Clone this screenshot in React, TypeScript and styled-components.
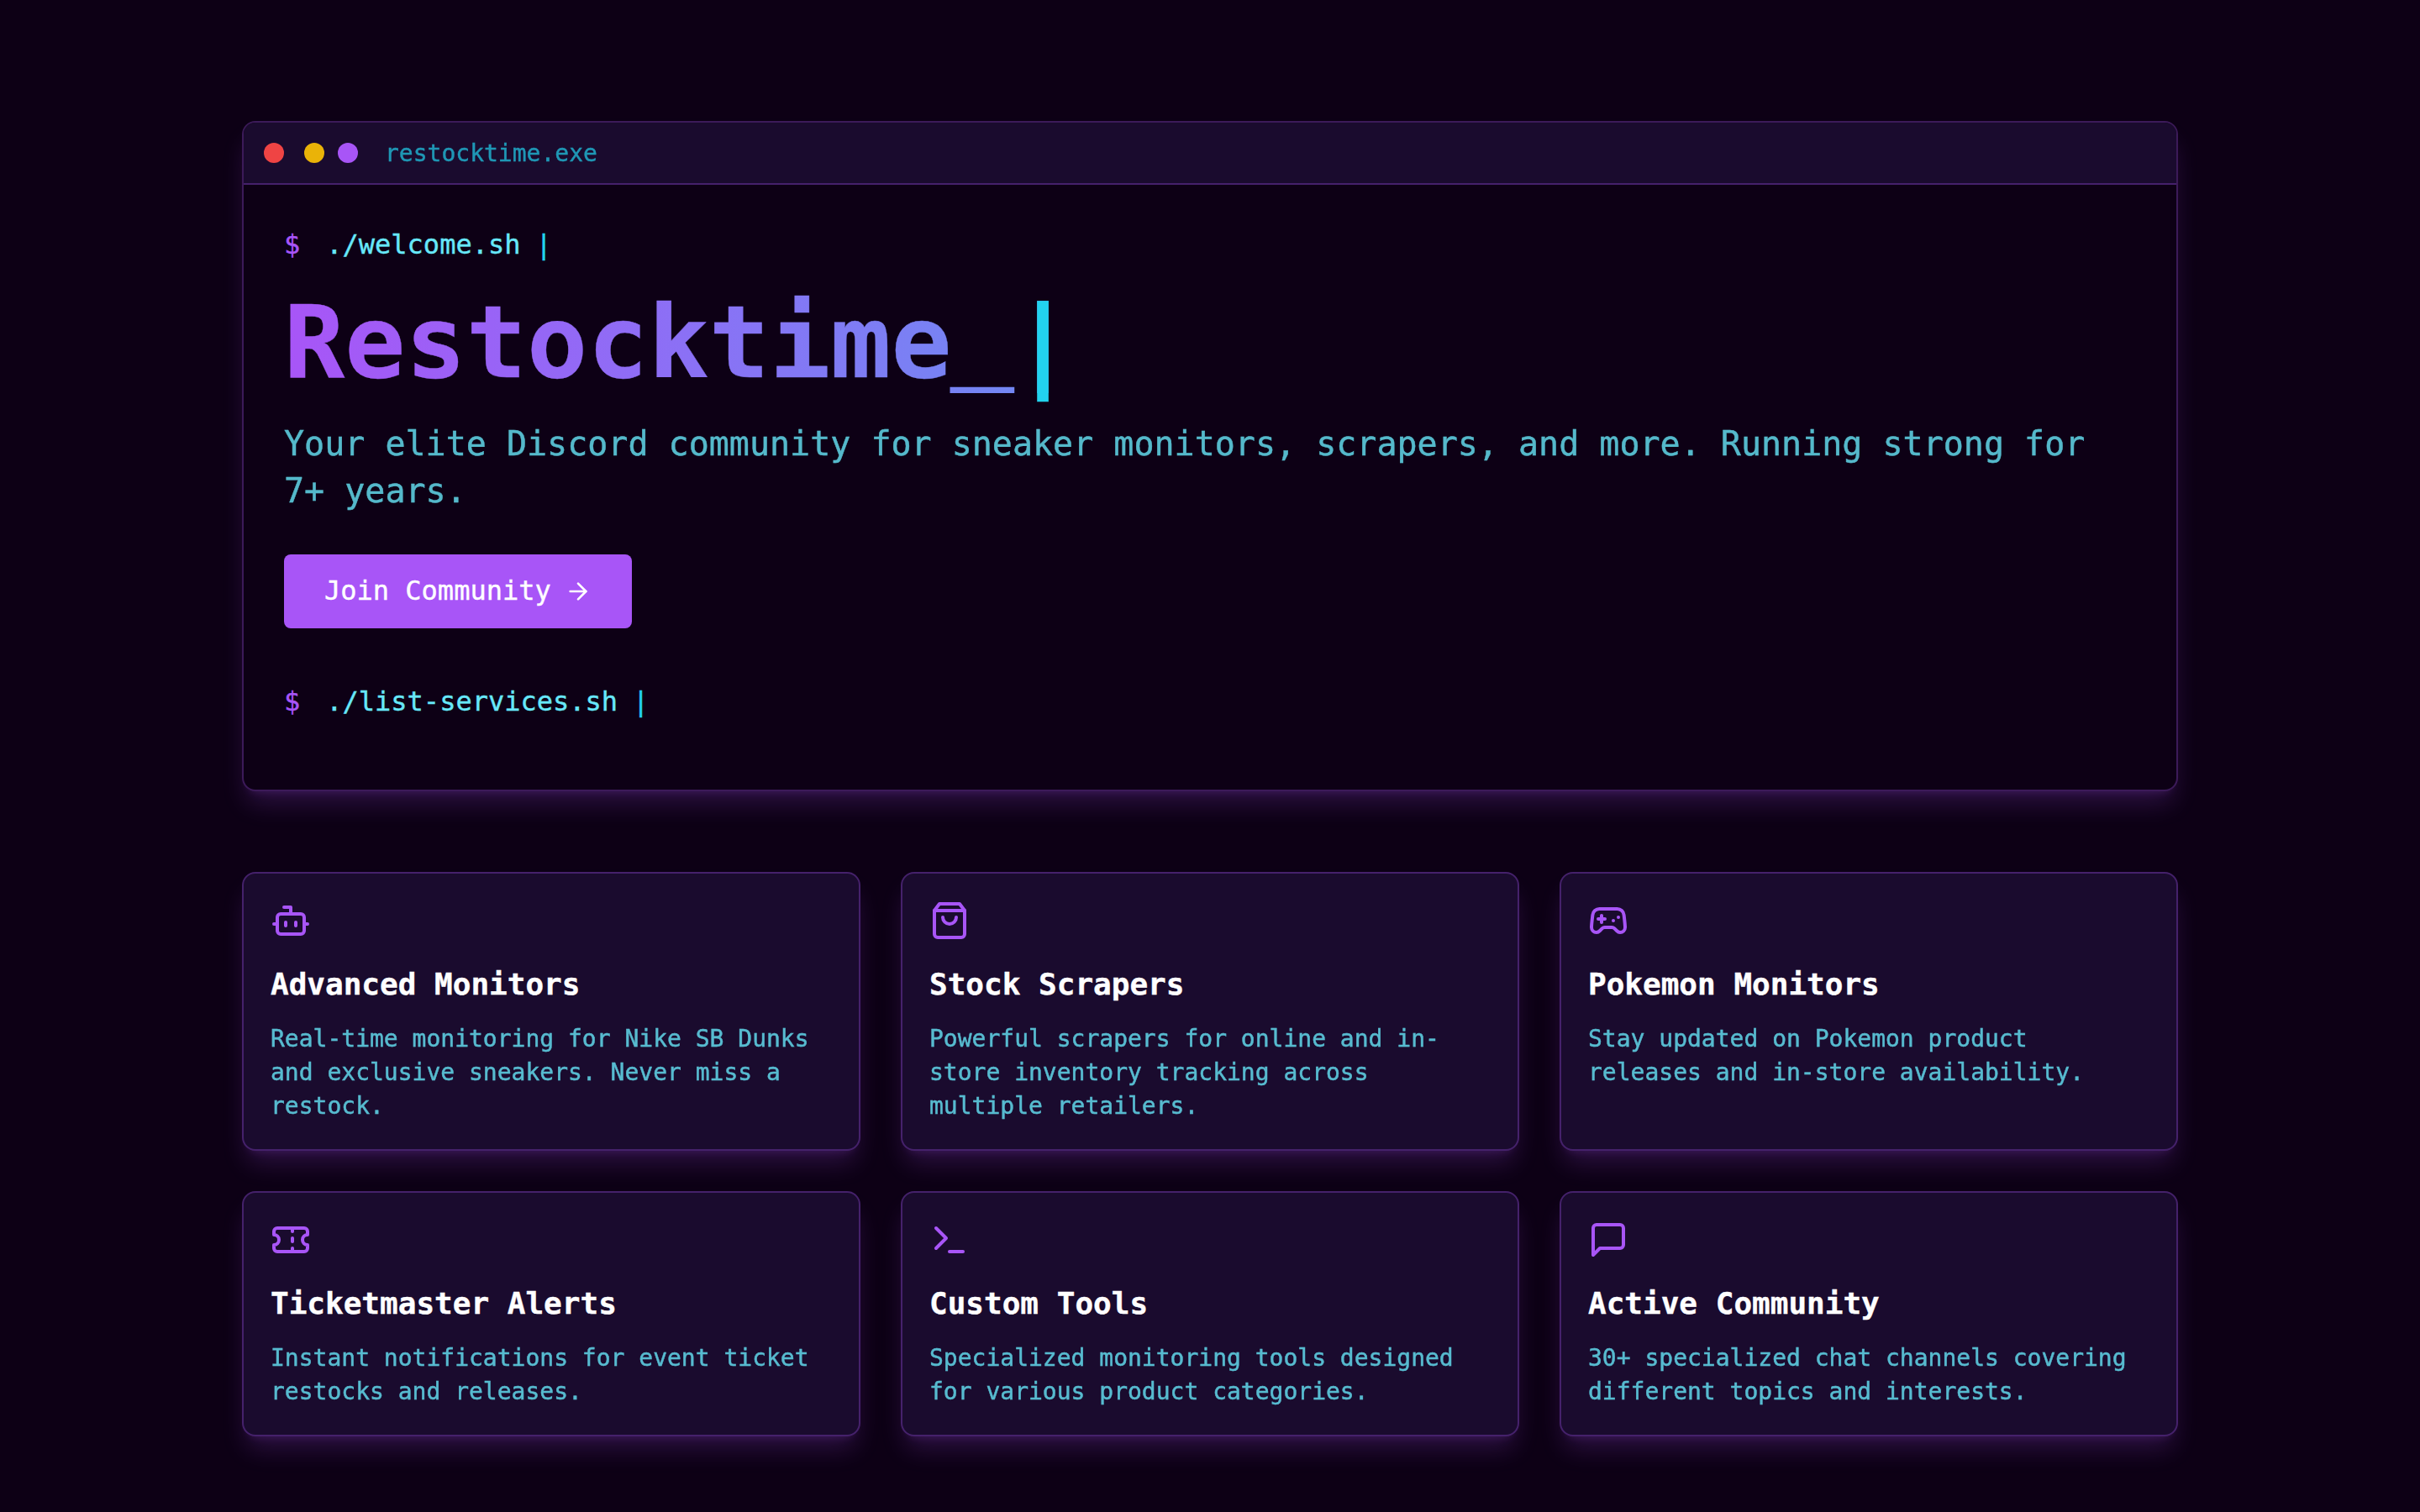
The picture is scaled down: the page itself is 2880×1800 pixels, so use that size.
import React from 'react';
import styled, { createGlobalStyle } from 'styled-components';
import { ArrowRight, Bot, Gamepad2, Terminal, Ticket } from 'lucide-react';

const GlobalStyle = createGlobalStyle`
  * {
    box-sizing: border-box;
    margin: 0;
    padding: 0;
  }

  body {
    background: #0d0015;
    color: #fff;
    font-family: Menlo, 'DejaVu Sans Mono', 'Liberation Mono', monospace;
    font-size: 32px;
    line-height: 48px;
    -webkit-text-stroke: 0.4px currentColor;
  }
`;

const Page = styled.main`
  width: 100%;
  min-height: 1800px;
  padding: 144px 0 90px;
  overflow: hidden;
`;

const Container = styled.div`
  width: 2304px;
  margin: 0 auto;
`;

const Window = styled.section`
  border: 2px solid rgba(168, 85, 247, 0.3);
  border-radius: 16px;
  background: #0d0015;
  overflow: hidden;
  margin-bottom: 96px;
  box-shadow: 0 20px 30px -6px rgba(168, 85, 247, 0.2),
    0 8px 12px -8px rgba(168, 85, 247, 0.2);
`;

const TitleBar = styled.header`
  display: flex;
  align-items: center;
  height: 74px;
  padding: 0 24px;
  background: #1a0b2e;
  border-bottom: 2px solid rgba(168, 85, 247, 0.3);
`;

const Dot = styled.span<{ $color: string; $space: number }>`
  width: 24px;
  height: 24px;
  border-radius: 50%;
  background: ${(props) => props.$color};
  margin-right: ${(props) => props.$space}px;
`;

const FileName = styled.span`
  font-size: 28px;
  line-height: 40px;
  padding-top: 2px;
  color: #22d3ee;
  opacity: 0.7;
`;

const Body = styled.div`
  padding: 48px;
`;

const CommandLine = styled.div`
  display: flex;
  color: #67e8f9;
  line-height: 46px;
  padding-bottom: 2px;
  margin-bottom: 32px;
`;

const Prompt = styled.span`
  color: #a855f7;
  margin-right: 31px;
`;

const Cursor = styled.span`
  color: #22d3ee;
  margin-left: 18px;
`;

const Title = styled.h1`
  height: 120px;
  font-size: 120px;
  font-weight: 700;
  line-height: 120px;
  margin-bottom: 32px;
  color: transparent;
  background: linear-gradient(to right, #a855f7, #22d3ee);
  -webkit-background-clip: text;
  background-clip: text;
`;

const Underscore = styled.span`
  line-height: 0;
  vertical-align: 3px;
  -webkit-text-stroke-width: 4.5px;
`;

const TitleCursor = styled.span`
  color: #22d3ee;
  line-height: 0;
  vertical-align: -1px;
  -webkit-text-stroke-color: #22d3ee;
`;

const Lead = styled.p`
  font-size: 40px;
  line-height: 56px;
  color: #67e8f9;
  opacity: 0.8;
  margin-bottom: 48px;
`;

const JoinButton = styled.button`
  display: flex;
  align-items: center;
  gap: 16px;
  height: 88px;
  padding: 0 48px;
  border: 0;
  border-radius: 8px;
  background: #a855f7;
  color: #fff;
  font: inherit;
  cursor: pointer;
  margin-bottom: 64px;
`;

const JoinLabel = styled.span`
  padding-bottom: 2px;
`;

const Grid = styled.div`
  display: grid;
  grid-template-columns: repeat(3, 1fr);
  gap: 48px;
`;

const Card = styled.article`
  border: 2px solid rgba(168, 85, 247, 0.3);
  border-radius: 16px;
  padding: 32px 32px 31px;
  background: #1a0b2e;
  box-shadow: 0 20px 30px -6px rgba(168, 85, 247, 0.2),
    0 8px 12px -8px rgba(168, 85, 247, 0.2);

  svg {
    display: block;
    color: #a855f7;
    margin-bottom: 24px;
  }
`;

const CardTitle = styled.h3`
  font-size: 36px;
  font-weight: 700;
  line-height: 56px;
  margin-bottom: 17px;
`;

const CardText = styled.p`
  font-size: 28px;
  line-height: 40px;
  color: #67e8f9;
  opacity: 0.8;
`;

type IconProps = {
  size?: number;
};

const ShoppingBag = ({ size = 24 }: IconProps) => (
  <svg
    width={size}
    height={size}
    viewBox="0 0 24 24"
    fill="none"
    stroke="currentColor"
    strokeWidth="2"
    strokeLinecap="round"
    strokeLinejoin="round"
  >
    <path d="M6 2 3 6v14a2 2 0 0 0 2 2h14a2 2 0 0 0 2-2V6l-3-4Z" />
    <path d="M3 6h18" />
    <path d="M16 10a4 4 0 0 1-8 0" />
  </svg>
);

const MessageSquare = ({ size = 24 }: IconProps) => (
  <svg
    width={size}
    height={size}
    viewBox="0 0 24 24"
    fill="none"
    stroke="currentColor"
    strokeWidth="2"
    strokeLinecap="round"
    strokeLinejoin="round"
  >
    <path d="M21 15a2 2 0 0 1-2 2H7l-4 4V5a2 2 0 0 1 2-2h14a2 2 0 0 1 2 2z" />
  </svg>
);

const services = [
  {
    icon: Bot,
    title: 'Advanced Monitors',
    text: 'Real-time monitoring for Nike SB Dunks and exclusive sneakers. Never miss a restock.',
  },
  {
    icon: ShoppingBag,
    title: 'Stock Scrapers',
    text: 'Powerful scrapers for online and in-store inventory tracking across multiple retailers.',
  },
  {
    icon: Gamepad2,
    title: 'Pokemon Monitors',
    text: 'Stay updated on Pokemon product releases and in-store availability.',
  },
  {
    icon: Ticket,
    title: 'Ticketmaster Alerts',
    text: 'Instant notifications for event ticket restocks and releases.',
  },
  {
    icon: Terminal,
    title: 'Custom Tools',
    text: 'Specialized monitoring tools designed for various product categories.',
  },
  {
    icon: MessageSquare,
    title: 'Active Community',
    text: '30+ specialized chat channels covering different topics and interests.',
  },
];

const Command = ({ children }: { children: React.ReactNode }) => (
  <CommandLine>
    <Prompt>$</Prompt>
    <span>{children}</span>
    <Cursor>|</Cursor>
  </CommandLine>
);

const App = () => (
  <>
    <GlobalStyle />
    <Page>
      <Container>
        <Window>
          <TitleBar>
            <Dot $color="#ef4444" $space={24} />
            <Dot $color="#eab308" $space={16} />
            <Dot $color="#a855f7" $space={32} />
            <FileName>restocktime.exe</FileName>
          </TitleBar>
          <Body>
            <Command>./welcome.sh</Command>
            <Title>
              Restocktime<Underscore>_</Underscore>
              <TitleCursor>|</TitleCursor>
            </Title>
            <Lead>
              Your elite Discord community for sneaker monitors, scrapers, and
              more. Running strong for 7+ years.
            </Lead>
            <JoinButton>
              <JoinLabel>Join Community</JoinLabel>
              <ArrowRight size={32} />
            </JoinButton>
            <Command>./list-services.sh</Command>
          </Body>
        </Window>
        <Grid>
          {services.map(({ icon: Icon, title, text }) => (
            <Card key={title}>
              <Icon size={48} />
              <CardTitle>{title}</CardTitle>
              <CardText>{text}</CardText>
            </Card>
          ))}
        </Grid>
      </Container>
    </Page>
  </>
);

export default App;
